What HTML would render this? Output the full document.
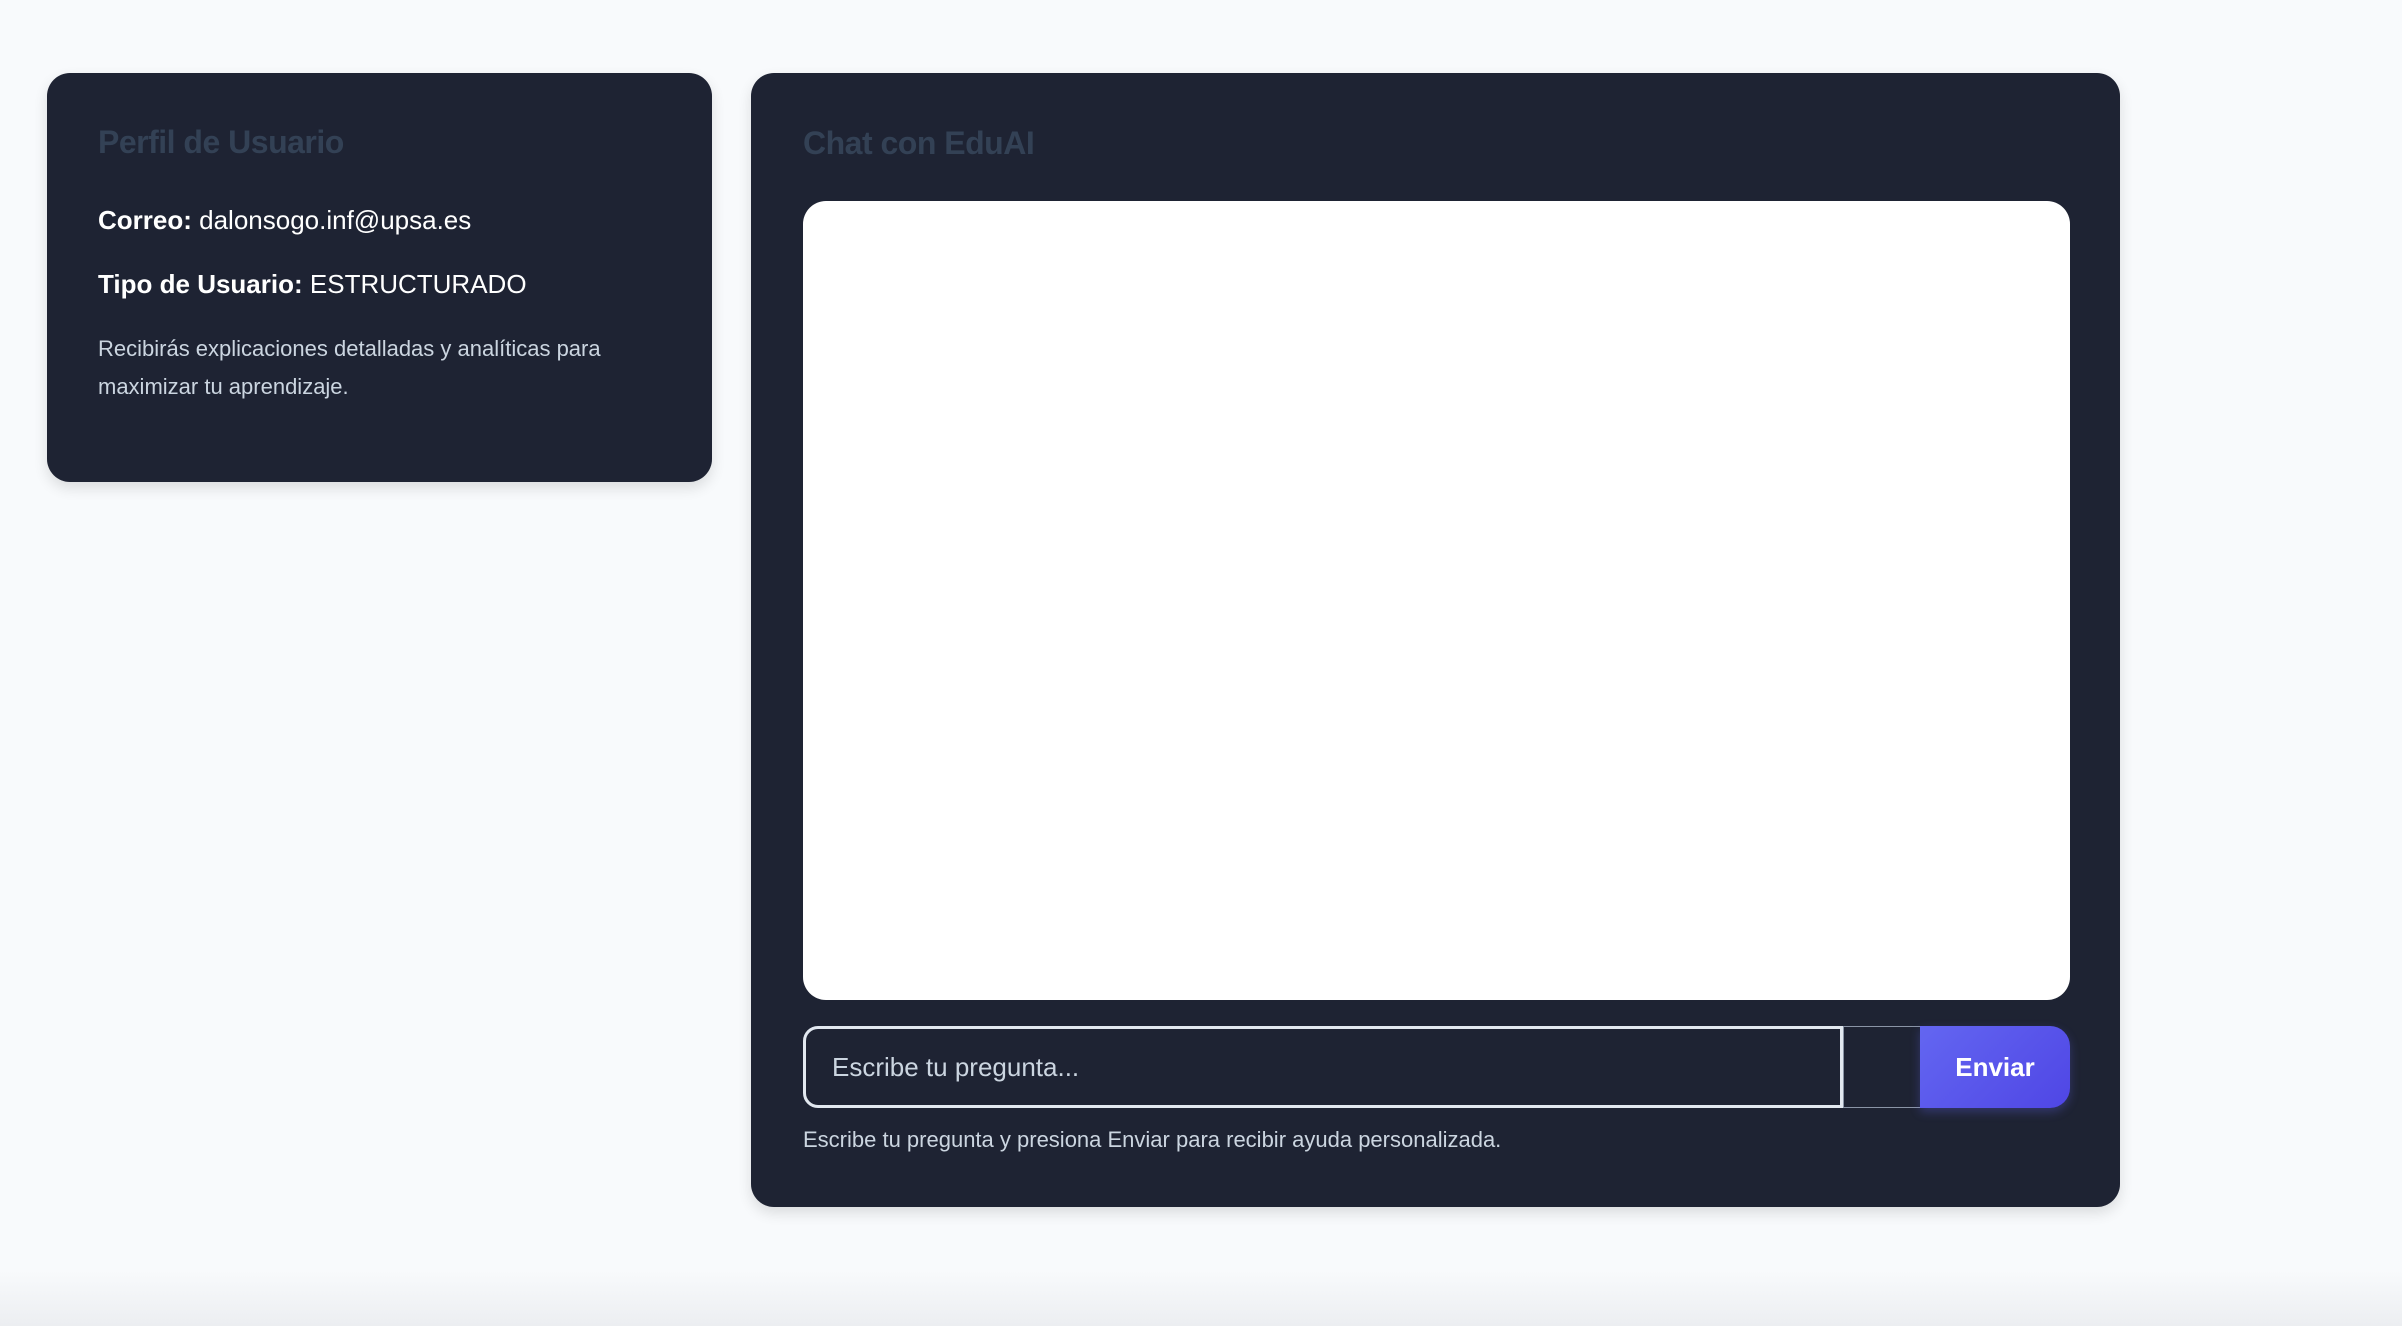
<!DOCTYPE html>
<html><head><meta charset="utf-8"><style>
*{box-sizing:border-box;margin:0;padding:0}
html,body{width:2402px;height:1326px;overflow:hidden}
body{background:linear-gradient(#f8fafc 0,#f8fafc 1270px,#eceef1 1326px);font-family:"Liberation Sans",sans-serif;position:relative}
.card{position:absolute;background:#1e2333;border-radius:23px;box-shadow:0 6px 14px rgba(0,0,0,.12)}
.t{position:absolute;color:#334155;font-weight:bold;font-size:32px;letter-spacing:-0.5px}
.l{position:absolute;color:#fff;font-size:26px;white-space:nowrap}
.d{position:absolute;color:#cbd5e0;font-size:22px;line-height:38px}
</style></head><body>
<div class="card" style="left:47px;top:73px;width:665px;height:409px">
  <div class="t" style="left:51px;top:51px">Perfil de Usuario</div>
  <div class="l" style="left:51px;top:132px"><b>Correo:</b> dalonsogo.inf@upsa.es</div>
  <div class="l" style="left:51px;top:196px"><b>Tipo de Usuario:</b> ESTRUCTURADO</div>
  <div class="d" style="left:51px;top:257px;width:580px">Recibirás explicaciones detalladas y analíticas para maximizar tu aprendizaje.</div>
</div>
<div class="card" style="left:751px;top:73px;width:1369px;height:1134px">
  <div class="t" style="left:52px;top:52px">Chat con EduAI</div>
  <div style="position:absolute;left:52px;top:128px;width:1267px;height:799px;background:#fff;border-radius:23px"></div>
  <div style="position:absolute;left:52px;top:953px;width:1040px;height:82px;border:3px solid #e2e8f0;border-radius:15px 0 0 15px;color:#cbd5e0;font-size:26px;line-height:76px;padding-left:26px">Escribe tu pregunta...</div>
  <div style="position:absolute;left:1092px;top:953px;width:77px;height:82px;border-top:1px solid #8a94a6;border-bottom:1px solid #8a94a6;border-left:1px solid #8a94a6"></div>
  <div style="position:absolute;left:1169px;top:953px;width:150px;height:82px;border-radius:0 20px 20px 0;background:linear-gradient(135deg,#6366f1,#4f46e5);color:#fff;font-weight:bold;font-size:26px;line-height:82px;text-align:center;box-shadow:0 4px 10px rgba(99,102,241,.3)">Enviar</div>
  <div class="d" style="left:52px;top:1048px;white-space:nowrap">Escribe tu pregunta y presiona Enviar para recibir ayuda personalizada.</div>
</div>
</body></html>
